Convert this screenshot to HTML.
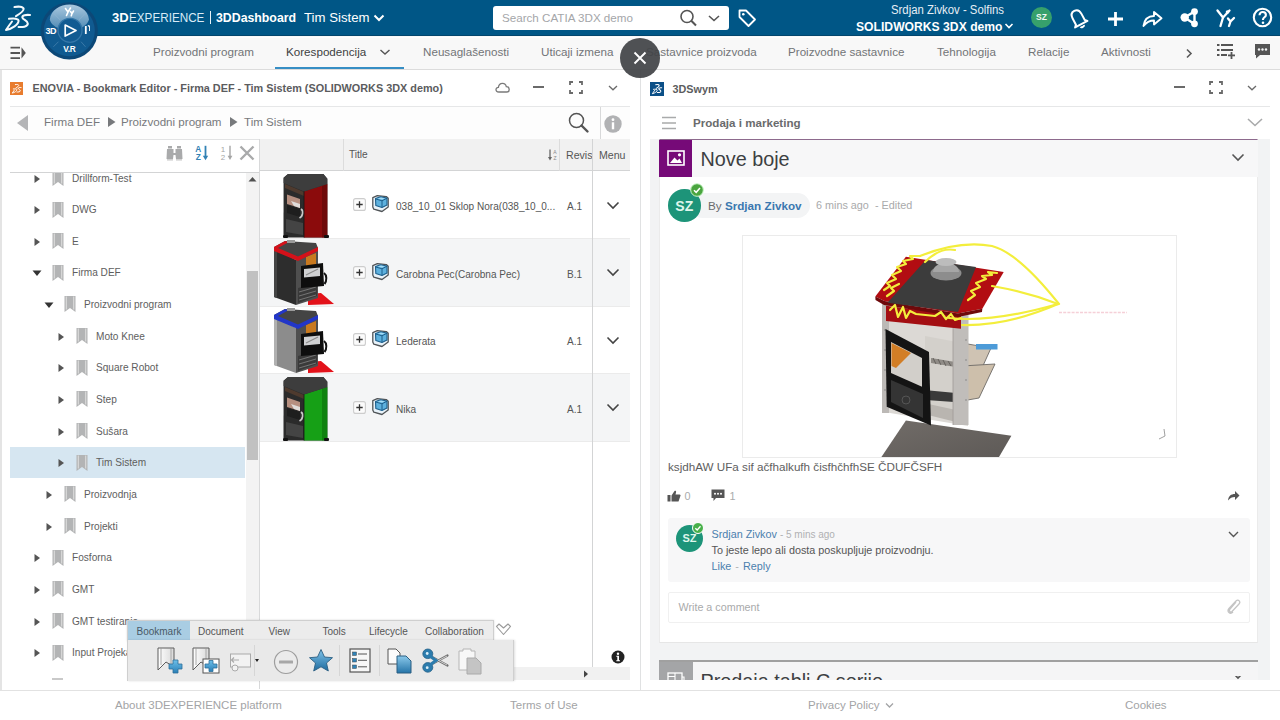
<!DOCTYPE html>
<html><head><meta charset="utf-8">
<style>
*{box-sizing:border-box;margin:0;padding:0}
html,body{width:1280px;height:720px;overflow:hidden;background:#fff;font-family:"Liberation Sans",sans-serif;position:relative}
.a{position:absolute}
.t{position:absolute;white-space:nowrap}
#hdr{left:0;top:0;width:1280px;height:36px;background:#005686}
#nav{left:0;top:36px;width:1280px;height:34px;background:#f8f8f8;border-bottom:1.5px solid #dcdcdc}
.nv{font-size:11.65px;line-height:13.4px;color:#727477;top:44.6px}
#lp{left:2px;top:70px;width:638px;height:618px;background:#fff}
#rp{left:641px;top:70px;width:639px;height:618px;background:#fff}
#ftr{left:0;top:689.5px;width:1280px;height:31px;background:#fff;border-top:1.5px solid #e2e2e2}
.ft{font-size:11.5px;line-height:13px;color:#a3a4a6;top:698.5px}
</style></head><body>
<!-- header -->
<div id="hdr" class="a"></div>
<div id="nav" class="a"></div>
<div class="a" style="left:0;top:35.3px;width:1280px;height:1.2px;background:#03466d"></div><div class="a" style="left:0;top:36.5px;width:1280px;height:1.5px;background:#fdfdfd"></div>

<!-- header content -->
<svg class="a" style="left:0;top:0" width="36" height="36" viewBox="0 0 36 36"><g fill="none" stroke="#f4f9fc" stroke-linecap="round" stroke-linejoin="round">
<path d="M14.5 7 C18 6.3 23 6.4 23.6 8.6 C24.2 11 19.5 14 16 16.2" stroke-width="2.1"/>
<path d="M9 18.8 C13 18.4 18.6 18.2 18.6 20.8 C18.6 24.5 12 28.8 6 30 C8 27 10.5 23.5 12 21.5" stroke-width="2"/>
<path d="M30 15 C26 14.7 22 15 22.4 17.6 C22.8 19.8 27.8 20.5 27.8 23.6 C27.8 27 22 27.2 18.6 27" stroke-width="2.1"/>
</g></svg>
<div class="t" style="left:112px;top:10px;font-size:13px;line-height:15px;color:#fff;font-weight:bold">3D</div>
<div class="t" style="left:128.5px;top:10px;font-size:13px;line-height:15px;color:#d9ebf7;transform:scaleX(0.9);transform-origin:0 0">EXPERIENCE</div>
<div class="a" style="left:210px;top:11px;width:1.3px;height:13px;background:#e8f2f8"></div>
<div class="t" style="left:216px;top:10px;font-size:13px;line-height:15px;color:#fff;font-weight:bold;transform:scaleX(0.947);transform-origin:0 0">3DDashboard</div>
<div class="t" style="left:303.5px;top:10px;font-size:13.4px;line-height:15px;color:#fff;transform:scaleX(0.985);transform-origin:0 0">Tim Sistem</div>
<svg class="a" style="left:373px;top:13px" width="12" height="10" viewBox="0 0 12 10"><path d="M1.5 2.5 L6 7 L10.5 2.5" fill="none" stroke="#fff" stroke-width="2"/></svg>
<div class="a" style="left:493px;top:6px;width:236px;height:24px;background:#fff;border-radius:3px"></div>
<div class="t" style="left:502px;top:10.6px;font-size:11.63px;line-height:13.4px;color:#a4a6a9">Search CATIA 3DX demo</div>
<svg class="a" style="left:679px;top:9px" width="20" height="18" viewBox="0 0 20 18"><circle cx="8" cy="7.5" r="6" fill="none" stroke="#555" stroke-width="1.6"/><path d="M12.3 11.8 L17 16.5" stroke="#555" stroke-width="2"/></svg>
<svg class="a" style="left:707px;top:13px" width="14" height="10" viewBox="0 0 14 10"><path d="M2 3 L7 7.5 L12 3" fill="none" stroke="#555" stroke-width="1.6"/></svg>
<svg class="a" style="left:737px;top:8px" width="20" height="20" viewBox="0 0 20 20"><path d="M2.5 2.5 L9 2.5 L18 11.5 L11.5 18 L2.5 9 Z" fill="none" stroke="#fff" stroke-width="1.8" stroke-linejoin="round"/><circle cx="6.3" cy="6.3" r="1.3" fill="#fff"/></svg>
<div class="t" style="left:891px;top:3px;font-size:12px;line-height:14px;color:#e6eef5;transform:scaleX(0.946);transform-origin:0 0">Srdjan Zivkov - Solfins</div>
<div class="t" style="left:855.5px;top:18.5px;font-size:13px;line-height:15px;color:#fff;font-weight:bold;transform:scaleX(0.935);transform-origin:0 0">SOLIDWORKS 3DX demo</div>
<svg class="a" style="left:1004px;top:22px" width="10" height="8" viewBox="0 0 10 8"><path d="M1.5 2 L5 5.5 L8.5 2" fill="none" stroke="#fff" stroke-width="1.6"/></svg>
<div class="a" style="left:1031px;top:6.8px;width:21px;height:21px;border-radius:50%;background:#36a06c"></div>
<div class="t" style="left:1031px;top:12px;width:21px;text-align:center;font-size:8.5px;line-height:10px;font-weight:bold;color:#f2f8f4">SZ</div>
<svg class="a" style="left:1066px;top:6px" width="24" height="23" viewBox="0 0 24 23"><g transform="rotate(-28 12 12)"><path d="M7 17 L7 10 C7 6 9 4 12 4 C15 4 17 6 17 10 L17 17 L19 19 H5 L7 17 Z" fill="none" stroke="#fff" stroke-width="2" stroke-linejoin="round"/><path d="M10 21 C10.5 22.5 13.5 22.5 14 21" fill="none" stroke="#fff" stroke-width="2"/></g></svg>
<svg class="a" style="left:1107px;top:10.5px" width="17" height="16" viewBox="0 0 17 16"><path d="M8.5 1 V15 M1 8 H16" stroke="#fff" stroke-width="2.8"/></svg>
<svg class="a" style="left:1142px;top:9px" width="21" height="19" viewBox="0 0 21 19"><path d="M1.5 17 C2.5 10 6.5 7 12 7 L12 3 L19.5 9.3 L12 15.5 L12 11.5 C7.5 11.5 4.5 13 1.5 17Z" fill="none" stroke="#fff" stroke-width="1.9" stroke-linejoin="round"/></svg>
<svg class="a" style="left:1179px;top:7px" width="21" height="21" viewBox="0 0 21 21"><path d="M5.5 10.5 L15.5 4.5 L15.5 17 Z" fill="none" stroke="#fff" stroke-width="2.4" stroke-linejoin="round"/><circle cx="5.7" cy="10.5" r="4.2" fill="#fff"/><circle cx="15.5" cy="4.6" r="3.4" fill="#fff"/><circle cx="15.5" cy="16.8" r="3.4" fill="#fff"/></svg>
<svg class="a" style="left:1215px;top:7px" width="21" height="21" viewBox="0 0 21 21"><g fill="none" stroke="#fff" stroke-width="2.3" stroke-linecap="round" stroke-linejoin="round"><path d="M2.5 3.5 L8 10.5 L5.5 19"/><path d="M14.5 3.5 L8 10.5"/><path d="M13 11.5 L15.5 14.5 L14 19 M19 11 L15.5 14.5"/></g><circle cx="12.5" cy="5" r="1.8" fill="#fff"/></svg>
<svg class="a" style="left:1252px;top:7px" width="21" height="21" viewBox="0 0 21 21"><circle cx="10.5" cy="10.5" r="8.7" fill="none" stroke="#fff" stroke-width="2.1"/><path d="M7.5 8.3 C7.5 6 9.2 5 10.7 5 C12.5 5 13.9 6.2 13.9 7.9 C13.9 10.3 11 10.3 11 12.6 L11 13" fill="none" stroke="#fff" stroke-width="2.1"/><circle cx="11" cy="15.8" r="1.3" fill="#fff"/></svg>
<!-- nav content -->
<svg class="a" style="left:9px;top:45px" width="18" height="16" viewBox="0 0 18 16"><path d="M1.5 2.6 H11 M1.5 8 H11 M1.5 13.2 H11" stroke="#555" stroke-width="1.8"/><path d="M12.5 2.3 L16.8 8 L12.5 13.6 Z" fill="#555"/></svg>
<div class="t nv" style="left:153px">Proizvodni program</div>
<div class="t nv" style="left:286px;color:#3d3f42">Korespodencija</div>
<svg class="a" style="left:379px;top:48px" width="12" height="8" viewBox="0 0 12 8"><path d="M1.5 2 L6 6 L10.5 2" fill="none" stroke="#555" stroke-width="1.4"/></svg>
<div class="a" style="left:275px;top:67px;width:129px;height:2px;background:#368ec4"></div>
<div class="t nv" style="left:423px">Neusaglašenosti</div>
<div class="t nv" style="left:541px">Uticaji izmena</div>
<div class="t nv" style="left:646px">Sastavnice proizvoda</div>
<div class="t nv" style="left:788px">Proizvodne sastavnice</div>
<div class="t nv" style="left:937px">Tehnologija</div>
<div class="t nv" style="left:1028px">Relacije</div>
<div class="t nv" style="left:1101px">Aktivnosti</div>
<svg class="a" style="left:1185px;top:48px" width="9" height="11" viewBox="0 0 9 11"><path d="M2 1.5 L6 5.5 L2 9.5" fill="none" stroke="#5a5a5a" stroke-width="1.6"/></svg>
<svg class="a" style="left:1216px;top:43px" width="20" height="18" viewBox="0 0 20 18"><g fill="#555"><rect x="1" y="1" width="2.5" height="2"/><rect x="5" y="1" width="12" height="2"/><rect x="1" y="6" width="2.5" height="2"/><rect x="5" y="6" width="12" height="2"/><rect x="1" y="11" width="2.5" height="2"/><rect x="5" y="11" width="6" height="2"/><rect x="12" y="11.5" width="7" height="1.8"/><rect x="14.6" y="9" width="1.8" height="7"/></g></svg>
<svg class="a" style="left:1254px;top:43px" width="17" height="17" viewBox="0 0 17 17"><path d="M1 1 H16 V12 H6 L2 15.5 V12 H1 Z" fill="#555"/><circle cx="5" cy="6.5" r="1.2" fill="#f4f5f6"/><circle cx="8.5" cy="6.5" r="1.2" fill="#f4f5f6"/><circle cx="12" cy="6.5" r="1.2" fill="#f4f5f6"/></svg>


<div id="lp" class="a"></div>
<div id="rp" class="a"></div>

<!-- left panel content -->
<div class="a" style="left:0;top:70px;width:1.5px;height:620px;background:#e4e4e4"></div>
<div class="a" style="left:10px;top:82px;width:13px;height:13px;background:#e87c2e"></div>
<svg class="a" style="left:10px;top:82px" width="13" height="13" viewBox="0 0 13 13"><g fill="none" stroke="#fff" stroke-linecap="round" stroke-linejoin="round" transform="scale(0.37)"><path d="M14.5 7 C18 6.3 23 6.4 23.6 8.6 C24.2 11 19.5 14 16 16.2" stroke-width="2.6"/><path d="M9 18.8 C13 18.4 18.6 18.2 18.6 20.8 C18.6 24.5 12 28.8 6 30 C8 27 10.5 23.5 12 21.5" stroke-width="2.5"/><path d="M30 15 C26 14.7 22 15 22.4 17.6 C22.8 19.8 27.8 20.5 27.8 23.6 C27.8 27 22 27.2 18.6 27" stroke-width="2.6"/></g></svg>
<div class="t" style="left:32.5px;top:82px;font-size:10.85px;font-weight:bold;color:#5b5c5e">ENOVIA - Bookmark Editor - Firma DEF - Tim Sistem (SOLIDWORKS 3DX demo)</div>
<svg class="a" style="left:494.5px;top:82px" width="15" height="11" viewBox="0 0 15 11"><path d="M3.8 10 C1.8 10 1 8.8 1 7.6 C1 6.2 2.1 5.3 3.4 5.4 C3.6 3 5.3 1.3 7.5 1.3 C9.6 1.3 11 2.8 11.3 4.6 C13 4.6 14.2 5.8 14.2 7.4 C14.2 8.9 13.1 10 11.7 10 Z" fill="none" stroke="#7a7a7a" stroke-width="1.3"/></svg>
<div class="a" style="left:533px;top:86.3px;width:11px;height:1.8px;background:#6a6a6a"></div>
<svg class="a" style="left:568.5px;top:81px" width="14" height="13" viewBox="0 0 14 13"><path d="M1 4 V1 H4 M10 1 H13 V4 M13 9 V12 H10 M4 12 H1 V9" fill="none" stroke="#6a6a6a" stroke-width="1.8"/></svg>
<svg class="a" style="left:607.5px;top:84.5px" width="10" height="6" viewBox="0 0 10 6"><path d="M1 1 L5 4.8 L9 1" fill="none" stroke="#6a6a6a" stroke-width="1.3"/></svg>
<div class="a" style="left:10px;top:106px;width:620px;height:1px;background:#e6e7e8"></div>
<!-- breadcrumb -->
<div class="a" style="left:10px;top:107px;width:620px;height:32px;background:#fdfdfd"></div>
<svg class="a" style="left:16px;top:114px" width="13" height="18" viewBox="0 0 13 18"><path d="M12 1 L1 9 L12 17 Z" fill="#b4b5b7"/></svg>
<div class="t" style="left:44px;top:115px;font-size:11.6px;color:#77797c">Firma DEF</div>
<svg class="a" style="left:107px;top:116px" width="9" height="12" viewBox="0 0 9 12"><path d="M1 1 L8.5 6 L1 11 Z" fill="#77797c"/></svg>
<div class="t" style="left:121px;top:115px;font-size:11.6px;color:#77797c">Proizvodni program</div>
<svg class="a" style="left:229px;top:116px" width="9" height="12" viewBox="0 0 9 12"><path d="M1 1 L8.5 6 L1 11 Z" fill="#77797c"/></svg>
<div class="t" style="left:244px;top:115px;font-size:11.6px;color:#77797c">Tim Sistem</div>
<svg class="a" style="left:568px;top:112px" width="22" height="22" viewBox="0 0 22 22"><circle cx="8.5" cy="8.5" r="7" fill="none" stroke="#555" stroke-width="1.5"/><path d="M13.5 13.5 L19.5 19.5" stroke="#555" stroke-width="2.4" stroke-linecap="round"/></svg>
<div class="a" style="left:600px;top:107px;width:1px;height:32px;background:#d8d9da"></div>
<svg class="a" style="left:604px;top:115px" width="18" height="18" viewBox="0 0 18 18"><circle cx="9" cy="9" r="8.7" fill="#b1b2b4"/><circle cx="9" cy="4.7" r="1.4" fill="#fff"/><rect x="7.8" y="7.3" width="2.4" height="7" fill="#fff"/></svg>
<div class="a" style="left:10px;top:139px;width:620px;height:1px;background:#e2e3e4"></div>
<!-- tree toolbar -->
<svg class="a" style="left:166px;top:145px" width="17" height="16" viewBox="0 0 17 16"><g fill="#a9aaab"><rect x="2" y="1" width="4" height="2.5"/><rect x="11" y="1" width="4" height="2.5"/><path d="M1 4 H7.5 V8 H9.5 V4 H16 L16.5 14 H10 L9.5 10 H7.5 L7 14 H0.5 Z"/></g><rect x="1" y="14.2" width="6" height="1.3" fill="#c7c7c7"/><rect x="10" y="14.2" width="6" height="1.3" fill="#c7c7c7"/></svg>
<svg class="a" style="left:195px;top:145px" width="14" height="16" viewBox="0 0 14 16"><text x="3.3" y="7.3" font-family="Liberation Sans" font-weight="bold" font-size="8.3" fill="#3282b4" text-anchor="middle">A</text><text x="3.3" y="15" font-family="Liberation Sans" font-weight="bold" font-size="8.3" fill="#3282b4" text-anchor="middle">Z</text><path d="M10.5 0.8 V12.5" stroke="#3282b4" stroke-width="1.8"/><path d="M7.8 10.8 L10.5 15.3 L13.2 10.8 Z" fill="#3282b4"/></svg>
<svg class="a" style="left:220px;top:145px" width="14" height="16" viewBox="0 0 14 16"><text x="3" y="7" font-family="Liberation Sans" font-size="8" fill="#a5a5a5" text-anchor="middle">1</text><text x="3" y="15" font-family="Liberation Sans" font-size="8" fill="#a5a5a5" text-anchor="middle">2</text><path d="M10 0.8 V12.5" stroke="#a5a5a5" stroke-width="1.4"/><path d="M7.6 10.8 L10 15 L12.4 10.8 Z" fill="#a5a5a5"/></svg>
<svg class="a" style="left:239px;top:145px" width="16" height="16" viewBox="0 0 16 16"><path d="M1.5 1.5 L14.5 14.5 M14.5 1.5 L1.5 14.5" stroke="#a9aaab" stroke-width="2.4"/></svg>
<div class="a" style="left:10px;top:172px;width:250px;height:1px;background:#d3d4d5"></div>
<!-- tree -->
<div class="a" style="left:0;top:173px;width:246px;height:507px;overflow:hidden"><div class="a" style="left:0;top:-173px;width:246px;height:720px">
<div class="a" style="left:10px;top:447px;width:235px;height:31px;background:#d6e6f1"></div>
<svg class="a" style="left:33px;top:173.5px" width="8" height="10" viewBox="0 0 8 10"><path d="M1.5 1 L7 5 L1.5 9 Z" fill="#555"/></svg>
<svg class="a" style="left:52px;top:169.8px" width="12" height="16" viewBox="0 0 12 16"><path d="M0.5 0 H11.5 V16 L6 12 L0.5 16 Z" fill="#b3b4b5"/><path d="M2.3 0.5 V13.5 M9.7 0.5 V13.5" stroke="#dcdcdc" stroke-width="1.1"/></svg>
<div class="t" style="left:72px;top:172.5px;font-size:10.1px;color:#5e5e5e">Drillform-Test</div>
<svg class="a" style="left:33px;top:205.2px" width="8" height="10" viewBox="0 0 8 10"><path d="M1.5 1 L7 5 L1.5 9 Z" fill="#555"/></svg>
<svg class="a" style="left:52px;top:201.5px" width="12" height="16" viewBox="0 0 12 16"><path d="M0.5 0 H11.5 V16 L6 12 L0.5 16 Z" fill="#b3b4b5"/><path d="M2.3 0.5 V13.5 M9.7 0.5 V13.5" stroke="#dcdcdc" stroke-width="1.1"/></svg>
<div class="t" style="left:72px;top:204.2px;font-size:10.1px;color:#5e5e5e">DWG</div>
<svg class="a" style="left:33px;top:236.8px" width="8" height="10" viewBox="0 0 8 10"><path d="M1.5 1 L7 5 L1.5 9 Z" fill="#555"/></svg>
<svg class="a" style="left:52px;top:233.1px" width="12" height="16" viewBox="0 0 12 16"><path d="M0.5 0 H11.5 V16 L6 12 L0.5 16 Z" fill="#b3b4b5"/><path d="M2.3 0.5 V13.5 M9.7 0.5 V13.5" stroke="#dcdcdc" stroke-width="1.1"/></svg>
<div class="t" style="left:72px;top:235.8px;font-size:10.1px;color:#5e5e5e">E</div>
<svg class="a" style="left:32px;top:269.4px" width="10" height="8" viewBox="0 0 10 8"><path d="M0.5 1.5 L9.5 1.5 L5 7 Z" fill="#333"/></svg>
<svg class="a" style="left:52px;top:264.7px" width="12" height="16" viewBox="0 0 12 16"><path d="M0.5 0 H11.5 V16 L6 12 L0.5 16 Z" fill="#b3b4b5"/><path d="M2.3 0.5 V13.5 M9.7 0.5 V13.5" stroke="#dcdcdc" stroke-width="1.1"/></svg>
<div class="t" style="left:72px;top:267.4px;font-size:10.1px;color:#5e5e5e">Firma DEF</div>
<svg class="a" style="left:44px;top:301.1px" width="10" height="8" viewBox="0 0 10 8"><path d="M0.5 1.5 L9.5 1.5 L5 7 Z" fill="#333"/></svg>
<svg class="a" style="left:64px;top:296.4px" width="12" height="16" viewBox="0 0 12 16"><path d="M0.5 0 H11.5 V16 L6 12 L0.5 16 Z" fill="#b3b4b5"/><path d="M2.3 0.5 V13.5 M9.7 0.5 V13.5" stroke="#dcdcdc" stroke-width="1.1"/></svg>
<div class="t" style="left:84px;top:299.1px;font-size:10.1px;color:#5e5e5e">Proizvodni program</div>
<svg class="a" style="left:57px;top:331.8px" width="8" height="10" viewBox="0 0 8 10"><path d="M1.5 1 L7 5 L1.5 9 Z" fill="#555"/></svg>
<svg class="a" style="left:76px;top:328.1px" width="12" height="16" viewBox="0 0 12 16"><path d="M0.5 0 H11.5 V16 L6 12 L0.5 16 Z" fill="#b3b4b5"/><path d="M2.3 0.5 V13.5 M9.7 0.5 V13.5" stroke="#dcdcdc" stroke-width="1.1"/></svg>
<div class="t" style="left:96px;top:330.8px;font-size:10.1px;color:#5e5e5e">Moto Knee</div>
<svg class="a" style="left:57px;top:363.4px" width="8" height="10" viewBox="0 0 8 10"><path d="M1.5 1 L7 5 L1.5 9 Z" fill="#555"/></svg>
<svg class="a" style="left:76px;top:359.7px" width="12" height="16" viewBox="0 0 12 16"><path d="M0.5 0 H11.5 V16 L6 12 L0.5 16 Z" fill="#b3b4b5"/><path d="M2.3 0.5 V13.5 M9.7 0.5 V13.5" stroke="#dcdcdc" stroke-width="1.1"/></svg>
<div class="t" style="left:96px;top:362.4px;font-size:10.1px;color:#5e5e5e">Square Robot</div>
<svg class="a" style="left:57px;top:395.0px" width="8" height="10" viewBox="0 0 8 10"><path d="M1.5 1 L7 5 L1.5 9 Z" fill="#555"/></svg>
<svg class="a" style="left:76px;top:391.3px" width="12" height="16" viewBox="0 0 12 16"><path d="M0.5 0 H11.5 V16 L6 12 L0.5 16 Z" fill="#b3b4b5"/><path d="M2.3 0.5 V13.5 M9.7 0.5 V13.5" stroke="#dcdcdc" stroke-width="1.1"/></svg>
<div class="t" style="left:96px;top:394.0px;font-size:10.1px;color:#5e5e5e">Step</div>
<svg class="a" style="left:57px;top:426.7px" width="8" height="10" viewBox="0 0 8 10"><path d="M1.5 1 L7 5 L1.5 9 Z" fill="#555"/></svg>
<svg class="a" style="left:76px;top:423.0px" width="12" height="16" viewBox="0 0 12 16"><path d="M0.5 0 H11.5 V16 L6 12 L0.5 16 Z" fill="#b3b4b5"/><path d="M2.3 0.5 V13.5 M9.7 0.5 V13.5" stroke="#dcdcdc" stroke-width="1.1"/></svg>
<div class="t" style="left:96px;top:425.7px;font-size:10.1px;color:#5e5e5e">Sušara</div>
<svg class="a" style="left:57px;top:458.3px" width="8" height="10" viewBox="0 0 8 10"><path d="M1.5 1 L7 5 L1.5 9 Z" fill="#555"/></svg>
<svg class="a" style="left:76px;top:454.6px" width="12" height="16" viewBox="0 0 12 16"><path d="M0.5 0 H11.5 V16 L6 12 L0.5 16 Z" fill="#b3b4b5"/><path d="M2.3 0.5 V13.5 M9.7 0.5 V13.5" stroke="#dcdcdc" stroke-width="1.1"/></svg>
<div class="t" style="left:96px;top:457.3px;font-size:10.1px;color:#5e5e5e">Tim Sistem</div>
<svg class="a" style="left:45px;top:490.0px" width="8" height="10" viewBox="0 0 8 10"><path d="M1.5 1 L7 5 L1.5 9 Z" fill="#555"/></svg>
<svg class="a" style="left:64px;top:486.3px" width="12" height="16" viewBox="0 0 12 16"><path d="M0.5 0 H11.5 V16 L6 12 L0.5 16 Z" fill="#b3b4b5"/><path d="M2.3 0.5 V13.5 M9.7 0.5 V13.5" stroke="#dcdcdc" stroke-width="1.1"/></svg>
<div class="t" style="left:84px;top:489.0px;font-size:10.1px;color:#5e5e5e">Proizvodnja</div>
<svg class="a" style="left:45px;top:521.6px" width="8" height="10" viewBox="0 0 8 10"><path d="M1.5 1 L7 5 L1.5 9 Z" fill="#555"/></svg>
<svg class="a" style="left:64px;top:517.9px" width="12" height="16" viewBox="0 0 12 16"><path d="M0.5 0 H11.5 V16 L6 12 L0.5 16 Z" fill="#b3b4b5"/><path d="M2.3 0.5 V13.5 M9.7 0.5 V13.5" stroke="#dcdcdc" stroke-width="1.1"/></svg>
<div class="t" style="left:84px;top:520.6px;font-size:10.1px;color:#5e5e5e">Projekti</div>
<svg class="a" style="left:33px;top:553.3px" width="8" height="10" viewBox="0 0 8 10"><path d="M1.5 1 L7 5 L1.5 9 Z" fill="#555"/></svg>
<svg class="a" style="left:52px;top:549.6px" width="12" height="16" viewBox="0 0 12 16"><path d="M0.5 0 H11.5 V16 L6 12 L0.5 16 Z" fill="#b3b4b5"/><path d="M2.3 0.5 V13.5 M9.7 0.5 V13.5" stroke="#dcdcdc" stroke-width="1.1"/></svg>
<div class="t" style="left:72px;top:552.3px;font-size:10.1px;color:#5e5e5e">Fosforna</div>
<svg class="a" style="left:33px;top:585.0px" width="8" height="10" viewBox="0 0 8 10"><path d="M1.5 1 L7 5 L1.5 9 Z" fill="#555"/></svg>
<svg class="a" style="left:52px;top:581.3px" width="12" height="16" viewBox="0 0 12 16"><path d="M0.5 0 H11.5 V16 L6 12 L0.5 16 Z" fill="#b3b4b5"/><path d="M2.3 0.5 V13.5 M9.7 0.5 V13.5" stroke="#dcdcdc" stroke-width="1.1"/></svg>
<div class="t" style="left:72px;top:584.0px;font-size:10.1px;color:#5e5e5e">GMT</div>
<svg class="a" style="left:33px;top:616.6px" width="8" height="10" viewBox="0 0 8 10"><path d="M1.5 1 L7 5 L1.5 9 Z" fill="#555"/></svg>
<svg class="a" style="left:52px;top:612.9px" width="12" height="16" viewBox="0 0 12 16"><path d="M0.5 0 H11.5 V16 L6 12 L0.5 16 Z" fill="#b3b4b5"/><path d="M2.3 0.5 V13.5 M9.7 0.5 V13.5" stroke="#dcdcdc" stroke-width="1.1"/></svg>
<div class="t" style="left:72px;top:615.6px;font-size:10.1px;color:#5e5e5e">GMT testiranje</div>
<svg class="a" style="left:33px;top:648.2px" width="8" height="10" viewBox="0 0 8 10"><path d="M1.5 1 L7 5 L1.5 9 Z" fill="#555"/></svg>
<svg class="a" style="left:52px;top:644.5px" width="12" height="16" viewBox="0 0 12 16"><path d="M0.5 0 H11.5 V16 L6 12 L0.5 16 Z" fill="#b3b4b5"/><path d="M2.3 0.5 V13.5 M9.7 0.5 V13.5" stroke="#dcdcdc" stroke-width="1.1"/></svg>
<div class="t" style="left:72px;top:647.2px;font-size:10.1px;color:#5e5e5e">Input Projekat</div>
<div class="a" style="left:52px;top:677.5px;width:11px;height:2.5px;background:#c9c9c9"></div>
</div></div>
<div class="a" style="left:246px;top:173px;width:13px;height:507px;background:#f3f3f3"></div>
<div class="a" style="left:247px;top:271px;width:11px;height:189px;background:#c1c1c1"></div>
<svg class="a" style="left:248px;top:176px" width="9" height="6" viewBox="0 0 9 6"><path d="M0.5 5.5 L4.5 1 L8.5 5.5 Z" fill="#505050"/></svg>
<div class="a" style="left:259px;top:139px;width:1px;height:550px;background:#d8d9da"></div>
<div class="a" style="left:260px;top:139px;width:370px;height:32px;background:#f1f1f1;border-bottom:1px solid #d3d4d5"></div>
<div class="a" style="left:343px;top:139px;width:1px;height:32px;background:#dcdcdc"></div>
<div class="a" style="left:559px;top:139px;width:1px;height:32px;background:#dcdcdc"></div>
<div class="t" style="left:349px;top:149px;font-size:10.1px;color:#555">Title</div>
<svg class="a" style="left:547px;top:149px" width="11" height="12" viewBox="0 0 11 12"><path d="M3 0.5 V10" stroke="#666" stroke-width="1.3"/><path d="M1 8 L3 11.5 L5 8Z" fill="#666"/><text x="8" y="5" font-family="Liberation Sans" font-size="5" fill="#888" text-anchor="middle">A</text><text x="8" y="11" font-family="Liberation Sans" font-size="5" fill="#888" text-anchor="middle">Z</text></svg>
<div class="a" style="left:566px;top:148px;width:26px;height:14px;overflow:hidden"><div class="t" style="left:0;top:1px;font-size:10.6px;color:#555">Revision</div></div>
<div class="t" style="left:599px;top:149px;font-size:10.6px;color:#555">Menu</div>
<div class="a" style="left:260px;top:238.5px;width:370px;height:67.5px;background:#f4f5f6"></div>
<div class="a" style="left:260px;top:373.5px;width:370px;height:67.5px;background:#f4f5f6"></div>
<div class="a" style="left:260px;top:238px;width:370px;height:1px;background:#ebebeb"></div><div class="a" style="left:260px;top:305.5px;width:370px;height:1px;background:#ebebeb"></div><div class="a" style="left:260px;top:373px;width:370px;height:1px;background:#ebebeb"></div><div class="a" style="left:260px;top:440.5px;width:370px;height:1px;background:#ebebeb"></div>
<div class="a" style="left:592px;top:139px;width:1px;height:528px;background:#d3d4d5"></div>
<svg class="a" style="left:353px;top:198.2px" width="13" height="13" viewBox="0 0 13 13"><rect x="0.6" y="0.6" width="11.8" height="11.8" rx="2" fill="#fbfbfb" stroke="#cdcdcd" stroke-width="1.1"/><path d="M6.5 3.3 V9.7 M3.3 6.5 H9.7" stroke="#333" stroke-width="1.3"/></svg>
<svg class="a" style="left:371.5px;top:195.2px" width="17" height="18" viewBox="0 0 17 18"><path d="M0.8 2.6 L5.3 0.7 L14.3 1.6 L16.2 3.3 V12 L10 16.5 L1.8 14.2 L0.8 12 Z" fill="#e8f2f9" stroke="#505457" stroke-width="1.3" stroke-linejoin="round"/><path d="M3.5 3.5 L8.5 1.8 L15 3 V10 L10 12.5 L3.8 10.5 Z" fill="#5db1de" stroke="#1d5f8c" stroke-width="1.1" stroke-linejoin="round"/><path d="M3.8 4 L10 5.8 L15 3.2 M10 5.8 V12" stroke="#1d5f8c" stroke-width="1" fill="none"/><path d="M5.5 3.5 L9 2.5 L13 3.4 L10 4.6Z" fill="#a6dcf5"/></svg>
<div class="t" style="left:396px;top:201.2px;font-size:10.05px;color:#555">038_10_01 Sklop Nora(038_10_0...</div>
<div class="t" style="left:567px;top:201.2px;font-size:10.05px;color:#555">A.1</div>
<svg class="a" style="left:606px;top:200.8px" width="14" height="9" viewBox="0 0 14 9"><path d="M1.5 1.5 L7 7 L12.5 1.5" fill="none" stroke="#444" stroke-width="1.6"/></svg>
<svg class="a" style="left:353px;top:265.8px" width="13" height="13" viewBox="0 0 13 13"><rect x="0.6" y="0.6" width="11.8" height="11.8" rx="2" fill="#fbfbfb" stroke="#cdcdcd" stroke-width="1.1"/><path d="M6.5 3.3 V9.7 M3.3 6.5 H9.7" stroke="#333" stroke-width="1.3"/></svg>
<svg class="a" style="left:371.5px;top:262.8px" width="17" height="18" viewBox="0 0 17 18"><path d="M0.8 2.6 L5.3 0.7 L14.3 1.6 L16.2 3.3 V12 L10 16.5 L1.8 14.2 L0.8 12 Z" fill="#e8f2f9" stroke="#505457" stroke-width="1.3" stroke-linejoin="round"/><path d="M3.5 3.5 L8.5 1.8 L15 3 V10 L10 12.5 L3.8 10.5 Z" fill="#5db1de" stroke="#1d5f8c" stroke-width="1.1" stroke-linejoin="round"/><path d="M3.8 4 L10 5.8 L15 3.2 M10 5.8 V12" stroke="#1d5f8c" stroke-width="1" fill="none"/><path d="M5.5 3.5 L9 2.5 L13 3.4 L10 4.6Z" fill="#a6dcf5"/></svg>
<div class="t" style="left:396px;top:268.8px;font-size:10.05px;color:#555">Carobna Pec(Carobna Pec)</div>
<div class="t" style="left:567px;top:268.8px;font-size:10.05px;color:#555">B.1</div>
<svg class="a" style="left:606px;top:268.2px" width="14" height="9" viewBox="0 0 14 9"><path d="M1.5 1.5 L7 7 L12.5 1.5" fill="none" stroke="#444" stroke-width="1.6"/></svg>
<svg class="a" style="left:353px;top:333.2px" width="13" height="13" viewBox="0 0 13 13"><rect x="0.6" y="0.6" width="11.8" height="11.8" rx="2" fill="#fbfbfb" stroke="#cdcdcd" stroke-width="1.1"/><path d="M6.5 3.3 V9.7 M3.3 6.5 H9.7" stroke="#333" stroke-width="1.3"/></svg>
<svg class="a" style="left:371.5px;top:330.2px" width="17" height="18" viewBox="0 0 17 18"><path d="M0.8 2.6 L5.3 0.7 L14.3 1.6 L16.2 3.3 V12 L10 16.5 L1.8 14.2 L0.8 12 Z" fill="#e8f2f9" stroke="#505457" stroke-width="1.3" stroke-linejoin="round"/><path d="M3.5 3.5 L8.5 1.8 L15 3 V10 L10 12.5 L3.8 10.5 Z" fill="#5db1de" stroke="#1d5f8c" stroke-width="1.1" stroke-linejoin="round"/><path d="M3.8 4 L10 5.8 L15 3.2 M10 5.8 V12" stroke="#1d5f8c" stroke-width="1" fill="none"/><path d="M5.5 3.5 L9 2.5 L13 3.4 L10 4.6Z" fill="#a6dcf5"/></svg>
<div class="t" style="left:396px;top:336.2px;font-size:10.05px;color:#555">Lederata</div>
<div class="t" style="left:567px;top:336.2px;font-size:10.05px;color:#555">A.1</div>
<svg class="a" style="left:606px;top:335.8px" width="14" height="9" viewBox="0 0 14 9"><path d="M1.5 1.5 L7 7 L12.5 1.5" fill="none" stroke="#444" stroke-width="1.6"/></svg>
<svg class="a" style="left:353px;top:400.8px" width="13" height="13" viewBox="0 0 13 13"><rect x="0.6" y="0.6" width="11.8" height="11.8" rx="2" fill="#fbfbfb" stroke="#cdcdcd" stroke-width="1.1"/><path d="M6.5 3.3 V9.7 M3.3 6.5 H9.7" stroke="#333" stroke-width="1.3"/></svg>
<svg class="a" style="left:371.5px;top:397.8px" width="17" height="18" viewBox="0 0 17 18"><path d="M0.8 2.6 L5.3 0.7 L14.3 1.6 L16.2 3.3 V12 L10 16.5 L1.8 14.2 L0.8 12 Z" fill="#e8f2f9" stroke="#505457" stroke-width="1.3" stroke-linejoin="round"/><path d="M3.5 3.5 L8.5 1.8 L15 3 V10 L10 12.5 L3.8 10.5 Z" fill="#5db1de" stroke="#1d5f8c" stroke-width="1.1" stroke-linejoin="round"/><path d="M3.8 4 L10 5.8 L15 3.2 M10 5.8 V12" stroke="#1d5f8c" stroke-width="1" fill="none"/><path d="M5.5 3.5 L9 2.5 L13 3.4 L10 4.6Z" fill="#a6dcf5"/></svg>
<div class="t" style="left:396px;top:403.8px;font-size:10.05px;color:#555">Nika</div>
<div class="t" style="left:567px;top:403.8px;font-size:10.05px;color:#555">A.1</div>
<svg class="a" style="left:606px;top:403.2px" width="14" height="9" viewBox="0 0 14 9"><path d="M1.5 1.5 L7 7 L12.5 1.5" fill="none" stroke="#444" stroke-width="1.6"/></svg>



<svg class="a" style="left:282px;top:173px" width="48" height="66" viewBox="0 0 48 66">
<path d="M1.6 4.8 L6 0.9 H41.4 L45.3 5.7 V62 L43 64.5 H4 L1.5 62 Z" fill="#2b2b2b"/>
<path d="M22 18.4 L45.3 11 V62 L43 64.5 H22 Z" fill="#8b0b0c"/>
<path d="M40 13 L45.3 11 V62 L43 64.5 H40 Z" fill="#5c0808" opacity="0.6"/>
<path d="M1.6 4.8 L6 0.9 H41.4 L45.3 5.7 L45.3 11 L22 18.4 L1.6 10 Z" fill="#3d3d3d"/>
<path d="M3 11 L22 19 V23 L3 15 Z" fill="#4e3a2e"/>
<path d="M5 21.5 L18 26 V35 L5 31 Z" fill="#b68f80"/>
<path d="M9 28 L18 31 V35 L12 33 Z" fill="#e0dcda"/>
<path d="M5 32 L18 36 V44 L5 40 Z" fill="#1e1e1e"/>
<path d="M19 36 C22 38 21 43 17.5 45" stroke="#c9c9c9" stroke-width="1.8" fill="none"/>
<path d="M4 46 L21 50 V62 L4 59 Z" fill="#444"/>
<path d="M22 18.4 V64.5" stroke="#151515" stroke-width="0.8"/>
<rect x="1" y="62" width="5" height="3" rx="1" fill="#111"/><rect x="42" y="62" width="5" height="3" rx="1" fill="#111"/>
</svg>
<svg class="a" style="left:268px;top:238px" width="68" height="68" viewBox="0 0 68 68">
<path d="M40 56 L53 55 L66 66 L40 67 Z" fill="#e3121a"/>
<path d="M6 10 L28 22 V67 L6 59 Z" fill="#2d2d2d"/>
<path d="M6 10 L9 10 V60 L6 59Z" fill="#444"/>
<path d="M28 22 L50 12 V60 L28 67 Z" fill="#4f4f4f"/>
<path d="M38 19 L48 15 V30 L38 34 Z" fill="#c8791f"/>
<path d="M30 50 L49 45 V58 L30 65Z" fill="#3a3a3a"/>
<path d="M31 54 L48 49 M31 58 L48 53 M31 62 L48 57" stroke="#7a7a7a" stroke-width="0.9"/>
<path d="M6 9 L17 3 L48 5 L50 10 L30 22 L6 12 Z" fill="#444"/>
<path d="M6 9 L17 3 L21 4 L10 10 L30 18.5 L50 9 V13 L30 23 L6 13 Z" fill="#d4111a"/>
<path d="M19 2 H27 V5 H19Z" fill="#9a9a9a"/>
<path d="M33 28 L55 25 L56 48 L33 50 Z" fill="#0e0e0e"/>
<path d="M36 31 L52 29.5 V38 L36 39.5 Z" fill="#cfd0d2"/>
<path d="M38 37 L50 31" stroke="#8c8c8c" stroke-width="1.2"/>
<path d="M56 35 C59 37 59 43 56.5 46" stroke="#111" stroke-width="2" fill="none"/>
</svg>
<svg class="a" style="left:268px;top:306px" width="68" height="68" viewBox="0 0 68 68">
<path d="M40 56 L53 55 L66 66 L40 67 Z" fill="#e3121a"/>
<path d="M6 10 L28 22 V67 L6 59 Z" fill="#8c8c8c"/>
<path d="M6 10 L9 10 V60 L6 59Z" fill="#b0b0b0"/>
<path d="M28 22 L50 12 V60 L28 67 Z" fill="#4f4f4f"/>
<path d="M38 19 L48 15 V30 L38 34 Z" fill="#c8791f"/>
<path d="M30 50 L49 45 V58 L30 65Z" fill="#3a3a3a"/>
<path d="M31 54 L48 49 M31 58 L48 53 M31 62 L48 57" stroke="#7a7a7a" stroke-width="0.9"/>
<path d="M6 9 L17 3 L48 5 L50 10 L30 22 L6 12 Z" fill="#444"/>
<path d="M6 9 L17 3 L21 4 L10 10 L30 18.5 L50 9 V13 L30 23 L6 13 Z" fill="#2236c8"/>
<path d="M19 2 H27 V5 H19Z" fill="#9a9a9a"/>
<path d="M33 28 L55 25 L56 48 L33 50 Z" fill="#0e0e0e"/>
<path d="M36 31 L52 29.5 V38 L36 39.5 Z" fill="#cfd0d2"/>
<path d="M38 37 L50 31" stroke="#8c8c8c" stroke-width="1.2"/>
<path d="M56 35 C59 37 59 43 56.5 46" stroke="#111" stroke-width="2" fill="none"/>
</svg>
<svg class="a" style="left:282px;top:376px" width="48" height="66" viewBox="0 0 48 66">
<path d="M1.6 4.8 L6 0.9 H41.4 L45.3 5.7 V62 L43 64.5 H4 L1.5 62 Z" fill="#2b2b2b"/>
<path d="M22 18.4 L45.3 11 V62 L43 64.5 H22 Z" fill="#16a016"/>
<path d="M40 13 L45.3 11 V62 L43 64.5 H40 Z" fill="#0b6e0b" opacity="0.6"/>
<path d="M1.6 4.8 L6 0.9 H41.4 L45.3 5.7 L45.3 11 L22 18.4 L1.6 10 Z" fill="#3d3d3d"/>
<path d="M3 11 L22 19 V23 L3 15 Z" fill="#4e3a2e"/>
<path d="M5 21.5 L18 26 V35 L5 31 Z" fill="#b68f80"/>
<path d="M9 28 L18 31 V35 L12 33 Z" fill="#e0dcda"/>
<path d="M5 32 L18 36 V44 L5 40 Z" fill="#1e1e1e"/>
<path d="M19 36 C22 38 21 43 17.5 45" stroke="#c9c9c9" stroke-width="1.8" fill="none"/>
<path d="M4 46 L21 50 V62 L4 59 Z" fill="#444"/>
<path d="M22 18.4 V64.5" stroke="#151515" stroke-width="0.8"/>
<rect x="1" y="62" width="5" height="3" rx="1" fill="#111"/><rect x="42" y="62" width="5" height="3" rx="1" fill="#111"/>
</svg>
<div class="a" style="left:260px;top:667px;width:370px;height:13px;background:#f1f1f1"></div>
<svg class="a" style="left:582.5px;top:670px" width="6" height="8" viewBox="0 0 6 8"><path d="M1 0.5 L5 4 L1 7.5Z" fill="#444"/></svg>
<svg class="a" style="left:611px;top:650px" width="14" height="14" viewBox="0 0 14 14"><circle cx="7" cy="7" r="6.5" fill="#222"/><circle cx="7" cy="3.7" r="1.2" fill="#fff"/><path d="M5.3 5.8 H8 V10.3 H9 V11.3 H5.3 V10.3 H6.3 V6.8 H5.3Z" fill="#fff"/></svg>
<div class="a" style="left:630px;top:70px;width:10px;height:620px;background:#fff"></div>
<div class="a" style="left:640px;top:70px;width:1px;height:620px;background:#e0e1e2"></div>

<div id="ftr" class="a"></div>
<div class="t ft" style="left:115px">About 3DEXPERIENCE platform</div>
<div class="t ft" style="left:510px">Terms of Use</div>
<div class="t ft" style="left:808px">Privacy Policy</div>
<svg class="a" style="left:885px;top:702px" width="9" height="7" viewBox="0 0 9 7"><path d="M1 1.5 L4.5 5 L8 1.5" fill="none" stroke="#a3a4a6" stroke-width="1.3"/></svg>
<div class="t ft" style="left:1125px">Cookies</div>


<!-- right panel -->
<svg class="a" style="left:650px;top:82px" width="14" height="14" viewBox="0 0 14 14"><rect width="14" height="14" fill="#0b4f87"/><g fill="none" stroke="#fff" stroke-linecap="round" stroke-linejoin="round" transform="scale(0.39)"><path d="M14.5 7 C18 6.3 23 6.4 23.6 8.6 C24.2 11 19.5 14 16 16.2" stroke-width="2.6"/><path d="M9 18.8 C13 18.4 18.6 18.2 18.6 20.8 C18.6 24.5 12 28.8 6 30 C8 27 10.5 23.5 12 21.5" stroke-width="2.5"/><path d="M30 15 C26 14.7 22 15 22.4 17.6 C22.8 19.8 27.8 20.5 27.8 23.6 C27.8 27 22 27.2 18.6 27" stroke-width="2.6"/></g></svg>
<div class="t" style="left:672.5px;top:82.5px;font-size:10.8px;font-weight:bold;color:#5b5c5e">3DSwym</div>
<div class="a" style="left:1173.5px;top:86.3px;width:11px;height:1.8px;background:#6a6a6a"></div>
<svg class="a" style="left:1209px;top:81px" width="14" height="13" viewBox="0 0 14 13"><path d="M1 4 V1 H4 M10 1 H13 V4 M13 9 V12 H10 M4 12 H1 V9" fill="none" stroke="#6a6a6a" stroke-width="1.8"/></svg>
<svg class="a" style="left:1247px;top:84.5px" width="10" height="6" viewBox="0 0 10 6"><path d="M1 1 L5 4.8 L9 1" fill="none" stroke="#6a6a6a" stroke-width="1.3"/></svg>
<div class="a" style="left:650px;top:106px;width:620px;height:1px;background:#e6e7e8"></div>
<svg class="a" style="left:661px;top:115px" width="16" height="16" viewBox="0 0 16 16"><path d="M1 2.5 H15 M1 8 H15 M1 13.5 H15" stroke="#a9aaab" stroke-width="1.6"/></svg>
<div class="t" style="left:693px;top:116px;font-size:11.6px;font-weight:bold;color:#6a6b6d">Prodaja i marketing</div>
<svg class="a" style="left:1246px;top:117px" width="18" height="11" viewBox="0 0 18 11"><path d="M2 2 L9 8.5 L16 2" fill="none" stroke="#a9aaab" stroke-width="1.6"/></svg>
<!-- stream area -->
<div class="a" style="left:650px;top:139px;width:620px;height:541px;background:#f2f3f4"></div>
<!-- card -->
<div class="a" style="left:659px;top:139px;width:599px;height:504px;background:#fff;border-top:1px solid #8d6a8d;border-left:1px solid #ebebeb;border-right:1px solid #ebebeb;border-bottom:1px solid #e6e6e6"></div>
<div class="a" style="left:659px;top:140px;width:599px;height:37px;background:#f7f7f8"></div>
<div class="a" style="left:659px;top:140px;width:33px;height:37px;background:#760a78"></div>
<svg class="a" style="left:667px;top:149px" width="18" height="18" viewBox="0 0 18 18"><rect x="1" y="2" width="16" height="14" fill="none" stroke="#fff" stroke-width="1.6"/><path d="M3 14 L7.5 8.5 L10.5 11.5 L12.5 9.5 L15 14 Z" fill="#fff"/><circle cx="12.5" cy="5.8" r="1.6" fill="#fff"/></svg>
<div class="t" style="left:700.5px;top:148px;font-size:19.8px;color:#3d3f42">Nove boje</div>
<svg class="a" style="left:1231px;top:153px" width="14" height="9" viewBox="0 0 14 9"><path d="M1.5 1.5 L7 7 L12.5 1.5" fill="none" stroke="#555" stroke-width="1.6"/></svg>
<!-- author -->
<div class="a" style="left:690px;top:192.5px;width:120px;height:25px;border-radius:12.5px;background:#f3f4f5"></div>
<div class="a" style="left:668px;top:189.3px;width:32.5px;height:32.5px;border-radius:50%;background:#1d9479"></div>
<div class="t" style="left:668px;top:197.5px;width:32.5px;text-align:center;font-size:14px;line-height:16px;font-weight:bold;color:#dff6ec">SZ</div>
<svg class="a" style="left:690px;top:183px" width="14" height="14" viewBox="0 0 14 14"><circle cx="7" cy="7" r="6.3" fill="#4aa53f" stroke="#c8f5c8" stroke-width="1"/><path d="M4 7.2 L6.2 9.3 L10 5" fill="none" stroke="#fff" stroke-width="1.5"/></svg>
<div class="t" style="left:708px;top:198.5px;font-size:11.7px;color:#6a6b6d">By <b style="color:#3b78b0">Srdjan Zivkov</b></div>
<div class="t" style="left:816px;top:199px;font-size:10.8px;color:#a9aaab">6 mins ago</div>
<div class="t" style="left:875px;top:198.5px;font-size:10.8px;color:#a9aaab">- Edited</div>
<!-- image -->
<div class="a" style="left:742px;top:235px;width:435px;height:223px;background:#fff;border:1px solid #ebebeb"></div>
<svg class="a" style="left:743px;top:236px" width="433" height="221" viewBox="743 236 433 221">
<defs><linearGradient id="pl2" x1="0" y1="0" x2="1" y2="1"><stop offset="0" stop-color="#716c68"/><stop offset="1" stop-color="#5e5a57"/></linearGradient></defs>
<!-- bottom plate -->
<path d="M881.4 457 L905.9 420.4 L1011.4 435.7 L999 457 Z" fill="url(#pl2)"/>
<!-- trays -->
<path d="M962 343 L991 348 L977 379 L962 376 Z" fill="#cfc3b3" stroke="#6d6a66" stroke-width="0.9"/>
<path d="M962 366 L995 364 L979 398 L962 401 Z" fill="#cdbfab" stroke="#6d6a66" stroke-width="0.9"/>
<rect x="976" y="344" width="21.5" height="5.5" fill="#4d9bd8"/>
<!-- interior -->
<path d="M884 308 L967 322 L968 426 L884 412 Z" fill="#dcd9d5"/>
<path d="M925 336 L957 342 L957 414 L925 408 Z" fill="#d3d0cb"/>
<path d="M931 358 L955.5 362 L955.5 367 L931 363 Z" fill="#8f8b86"/>
<path d="M933 358 L936 364 M938 359 L941 365 M943 360 L946 366 M948 361 L951 366" stroke="#5f5b57" stroke-width="0.9"/>
<path d="M924 390 L956 393 L954 402 L926 400 Z" fill="#3a3a3a"/>
<path d="M924 403 L956 410 V422 L924 414Z" fill="#b9b5b0"/>
<rect x="882" y="304" width="7" height="109" fill="#bcb9b6"/>
<rect x="953" y="313" width="15.5" height="112" fill="#c0bdba"/>
<path d="M953 313 V425" stroke="#9e9b98" stroke-width="0.8"/>
<g fill="#777"><circle cx="885" cy="330" r="0.7"/><circle cx="885" cy="350" r="0.7"/><circle cx="885" cy="370" r="0.7"/><circle cx="885" cy="390" r="0.7"/><circle cx="966" cy="340" r="0.7"/><circle cx="966" cy="360" r="0.7"/><circle cx="966" cy="380" r="0.7"/><circle cx="966" cy="400" r="0.7"/></g>
<!-- door -->
<path d="M885.5 329 L929 352 L931 425.5 L886.7 406.7 Z" fill="#141414"/>
<path d="M891 342 L922 358 L922 386.7 L891 373 Z" fill="#d2cfca"/>
<path d="M891.5 343 L911 353 L896 368 L891.5 366 Z" fill="#d27e26"/>
<path d="M891 380 L923 394 L923 418 L891 402 Z" fill="#343434"/>
<circle cx="906" cy="400" r="4" fill="none" stroke="#555" stroke-width="1"/>
<!-- front band -->
<path d="M886 305.7 L961 315 L961 328.7 L886 321 Z" fill="#a30e12"/>
<!-- top plate -->
<path d="M875.3 296.6 L905.9 256.8 L1003.7 272 L982.3 308.8 L957.9 313.4 L884.5 301 Z" fill="#b20d12"/>
<path d="M875.3 296.6 L884.5 301 L957.9 313.4 L982.3 308.8 L982 312 L958 317 L884 305 L875.5 300 Z" fill="#6e090b"/>
<path d="M887.5 302.7 L925.7 260 L976 267 L958 312 Z" fill="#3c3c3c"/>
<ellipse cx="946" cy="273" rx="15.5" ry="7.5" fill="#8d8d8d"/>
<path d="M933 272 C933 260 959 260 959 272 Z" fill="#a6a6a6"/>
<ellipse cx="946" cy="262" rx="10.5" ry="4" fill="#bcbcbc"/>
<!-- yellow scribbles -->
<g fill="none" stroke="#f3ee3c" stroke-width="2.2" stroke-linecap="round" stroke-linejoin="round">
<path d="M884 290 L890 286 L887 283 L896 279 L892 275 L901 271 L897 267 L906 264 L903 261 L913 259 L910 256 L920 256"/>
<path d="M887 296 L894 291 L891 288 L899 284"/>
<path d="M968 300 L975 295 L971 291 L980 287 L976 283 L986 279 L982 276 L992 275 L988 272 L997 273"/>
<path d="M890 310 L895 305 L898 317 L903 307 L906 318 L910 311 L916 314 L935 316 L941 312 L946 319 L951 314 L955 320 L961 318"/>
<path d="M920 256 C945 246 970 242 992 246 C1015 252 1040 280 1059 304"/>
<path d="M925 262 C935 252 945 248 955 250"/>
<path d="M992 286 C1015 290 1040 297 1058 304"/>
<path d="M949 318 C985 322 1030 312 1058 304"/>
<path d="M962 325 C1000 326 1035 314 1058 304"/>
</g>
<path d="M1059 312.5 H1127" stroke="#f5d0d8" stroke-width="1.6" stroke-dasharray="3 1.2"/>
<path d="M1164 429 L1165 436 L1159 439" stroke="#888" stroke-width="0.8" fill="none"/>
</svg>
<div class="t" style="left:668px;top:460px;font-size:11.67px;color:#5e5e5e">ksjdhAW UFa sif ačfhalkufh čisfhčhfhSE ČDUFČSFH</div>
<!-- actions -->
<svg class="a" style="left:667px;top:490px" width="14" height="12" viewBox="0 0 14 12"><rect x="0.5" y="5" width="3" height="6.5" fill="#555"/><path d="M4.5 5.5 L7.5 1 C8.5 0.5 9.5 1 9 2.5 L8.5 4.5 H12.5 C13.5 4.5 13.8 5.5 13.3 6.3 L11.5 11.5 H4.5 Z" fill="#555"/></svg>
<div class="t" style="left:684.5px;top:490px;font-size:10.8px;color:#a9aaab">0</div>
<svg class="a" style="left:711px;top:489px" width="14" height="13" viewBox="0 0 14 13"><path d="M0.5 0.5 H13.5 V9 H5 L2.5 12 V9 H0.5 Z" fill="#555"/><circle cx="4" cy="4.7" r="1" fill="#fff"/><circle cx="7" cy="4.7" r="1" fill="#fff"/><circle cx="10" cy="4.7" r="1" fill="#fff"/></svg>
<div class="t" style="left:729.5px;top:490px;font-size:10.8px;color:#a9aaab">1</div>
<svg class="a" style="left:1227px;top:490px" width="13" height="11" viewBox="0 0 13 11"><path d="M1 10.5 C1.5 6 4 4 8 4 V1 L12.5 5.5 L8 10 V7 C5 7 3 8 1 10.5 Z" fill="#555"/></svg>
<!-- comment -->
<div class="a" style="left:667.5px;top:517.5px;width:582px;height:64.5px;background:#f7f7f8;border-radius:3px"></div>
<div class="a" style="left:676px;top:525px;width:27px;height:27px;border-radius:50%;background:#1d9479"></div>
<div class="t" style="left:676px;top:532px;width:27px;text-align:center;font-size:11px;line-height:13px;font-weight:bold;color:#dff6ec">SZ</div>
<svg class="a" style="left:692px;top:522px" width="12" height="12" viewBox="0 0 12 12"><circle cx="6" cy="6" r="5.5" fill="#48b04a" stroke="#fff" stroke-width="1"/><path d="M3.3 6.2 L5.2 8 L8.5 4.3" fill="none" stroke="#fff" stroke-width="1.3"/></svg>
<div class="t" style="left:711.5px;top:527.5px;font-size:10.8px;color:#4b7fae">Srdjan Zivkov <span style="color:#b0b1b3;font-size:10px">- 5 mins ago</span></div>
<div class="t" style="left:711.5px;top:543.5px;font-size:10.8px;color:#555">To jeste lepo ali dosta poskupljuje proizvodnju.</div>
<div class="t" style="left:711.5px;top:560px;font-size:10.8px;color:#4b7fae">Like <span style="color:#b0b1b3;margin:0 1px">-</span> Reply</div>
<svg class="a" style="left:1228px;top:531px" width="11" height="7" viewBox="0 0 11 7"><path d="M1 1 L5.5 5.5 L10 1" fill="none" stroke="#555" stroke-width="1.4"/></svg>
<div class="a" style="left:667.5px;top:592px;width:582px;height:31px;background:#fff;border:1px solid #f0f0f0;border-radius:2px"></div>
<div class="t" style="left:678.5px;top:600.5px;font-size:10.75px;color:#a9aaab">Write a comment</div>
<svg class="a" style="left:1226px;top:598px" width="16" height="17" viewBox="0 0 16 17"><path d="M10 4 L4 11 C2.5 13 4.5 15 6 13.5 L13 6 C15 4 12.5 0.5 10 3 L3 10.5 C0.5 13.5 4 17 7 14" fill="none" stroke="#c4c4c4" stroke-width="1.3"/></svg>
<!-- next card -->
<div class="a" style="left:659px;top:660px;width:599px;height:20px;background:#f5f5f6;border-top:2px solid #a0a0a0"></div>
<div class="a" style="left:659px;top:662px;width:34px;height:18px;background:#a4a5a7"></div>
<svg class="a" style="left:667px;top:672px" width="18" height="8" viewBox="0 0 18 8"><rect x="1" y="1" width="14" height="10" fill="none" stroke="#fff" stroke-width="1.3"/><path d="M8 1 V8 M1 4.5 H8" stroke="#fff" stroke-width="1.1"/><path d="M15 5 H17 V8" stroke="#fff" stroke-width="1.1" fill="none"/></svg>
<div class="a" style="left:659px;top:662px;width:599px;height:18px;overflow:hidden"><div class="t" style="left:41.5px;top:8px;font-size:19.8px;color:#3d3f42">Prodaja tabli C serije</div></div>
<svg class="a" style="left:1231px;top:676px" width="14" height="4" viewBox="0 0 14 4"><path d="M1.5 -3.5 L7 2 L12.5 -3.5" fill="none" stroke="#555" stroke-width="1.6"/></svg>
<div class="a" style="left:641px;top:680px;width:639px;height:9px;background:#fff"></div>

<!-- toolbar overlay -->
<div class="a" style="left:127px;top:620px;width:367px;height:21px;background:#ececec;border:1px solid #cfcfcf;border-bottom:1px solid #c9c9c9;box-shadow:0 0 2px rgba(0,0,0,0.15)"></div>
<div class="a" style="left:128px;top:621px;width:62px;height:19px;background:#a9cde3"></div>
<div class="t" style="left:136.5px;top:625.5px;font-size:10px;color:#4a5a66">Bookmark</div>
<div class="t" style="left:198px;top:625.5px;font-size:10px;color:#555">Document</div>
<div class="t" style="left:268.5px;top:625.5px;font-size:10px;color:#555">View</div>
<div class="t" style="left:322.5px;top:625.5px;font-size:10px;color:#555">Tools</div>
<div class="t" style="left:369px;top:625.5px;font-size:10px;color:#555">Lifecycle</div>
<div class="t" style="left:425px;top:625.5px;font-size:10px;color:#555">Collaboration</div>
<svg class="a" style="left:495px;top:623px" width="17" height="13" viewBox="0 0 17 13"><path d="M1.5 3.5 L4 1 L8.5 5 L13 1 L15.5 3.5 L8.5 11.5 Z" fill="#fff" stroke="#9a9a9a" stroke-width="1.1" stroke-linejoin="round"/></svg>
<div class="a" style="left:127px;top:640px;width:387px;height:41px;background:#e9e9e9;border-left:1px solid #cfcfcf;border-right:1px solid #cfcfcf;box-shadow:1px 0 2px rgba(0,0,0,0.12)"></div>
<div class="a" style="left:254px;top:645px;width:1px;height:31px;background:#d6d6d6"></div>
<div class="a" style="left:339px;top:645px;width:1px;height:31px;background:#d6d6d6"></div>
<div class="a" style="left:379px;top:645px;width:1px;height:31px;background:#d6d6d6"></div>
<!-- bookmark add -->
<svg class="a" style="left:157px;top:647px" width="26" height="27" viewBox="0 0 26 27"><defs><linearGradient id="bg1" x1="0" x2="1"><stop offset="0" stop-color="#fff"/><stop offset="1" stop-color="#d9d9d9"/></linearGradient><linearGradient id="pl" x1="0" y1="0" x2="0" y2="1"><stop offset="0" stop-color="#6ec0ea"/><stop offset="1" stop-color="#2a7fb6"/></linearGradient></defs>
<path d="M1 1 H17 V20 L9 15 L1 23 Z" fill="url(#bg1)" stroke="#5d5d5d" stroke-width="1"/><path d="M4 1 V18 M14 1 V17" stroke="#9a9a9a" stroke-width="0.8"/>
<path d="M16 13 H21 V17 H25 V22 H21 V26 H16 V22 H12 V17 H16 Z" fill="url(#pl)" stroke="#2d6f99" stroke-width="0.8"/></svg>
<svg class="a" style="left:192px;top:647px" width="28" height="27" viewBox="0 0 28 27">
<path d="M1 1 H17 V20 L9 15 L1 23 Z" fill="url(#bg1)" stroke="#5d5d5d" stroke-width="1"/><path d="M4 1 V18 M14 1 V17" stroke="#9a9a9a" stroke-width="0.8"/>
<rect x="11" y="12" width="16" height="14" fill="#fff" stroke="#555" stroke-width="1"/>
<path d="M17 13.5 H21 V17 H25 V21 H21 V24.5 H17 V21 H13 V17 H17 Z" fill="url(#pl)" stroke="#2d6f99" stroke-width="0.8"/></svg>
<svg class="a" style="left:229px;top:653px" width="34" height="20" viewBox="0 0 34 20"><rect x="1.5" y="1" width="20" height="13" fill="#f2f2f2" stroke="#aaa"/><path d="M3 7 H10 M5 4.5 L2.5 7 L5 9.5" stroke="#aaa" stroke-width="1.2" fill="none"/><circle cx="6" cy="15" r="3" fill="#f2f2f2" stroke="#aaa"/><path d="M26 6 L30 6 L28 9 Z" fill="#222"/></svg>
<svg class="a" style="left:273px;top:649px" width="26" height="26" viewBox="0 0 26 26"><circle cx="13" cy="13" r="11.5" fill="#ebebeb" stroke="#9d9d9d" stroke-width="1.2"/><rect x="6" y="11.5" width="14" height="3" rx="0.5" fill="#a7a7a7"/></svg>
<svg class="a" style="left:308px;top:648px" width="26" height="26" viewBox="0 0 26 26"><defs><linearGradient id="st" x1="0" y1="0" x2="0" y2="1"><stop offset="0" stop-color="#7fc3ea"/><stop offset="1" stop-color="#1f6b9e"/></linearGradient></defs><path d="M13 1.5 L16.5 9 L24.5 9.7 L18.5 15 L20.3 23 L13 18.8 L5.7 23 L7.5 15 L1.5 9.7 L9.5 9 Z" fill="url(#st)" stroke="#2b5f82" stroke-width="0.9" stroke-linejoin="round"/></svg>
<svg class="a" style="left:349px;top:648px" width="23" height="26" viewBox="0 0 23 26"><rect x="1" y="1" width="20" height="23" fill="#f7f7f7" stroke="#555" stroke-width="1.2"/><rect x="3.5" y="4" width="4" height="3.5" fill="#2f83b8" stroke="#444" stroke-width="0.5"/><rect x="3.5" y="10.5" width="4" height="3.5" fill="#2f83b8" stroke="#444" stroke-width="0.5"/><rect x="3.5" y="17" width="4" height="3.5" fill="#2f83b8" stroke="#444" stroke-width="0.5"/><path d="M9 6 H18 M9 12.3 H18 M9 18.8 H18" stroke="#555" stroke-width="1"/></svg>
<svg class="a" style="left:387px;top:648px" width="26" height="26" viewBox="0 0 26 26"><defs><linearGradient id="dc" x1="0" y1="0" x2="0" y2="1"><stop offset="0" stop-color="#8ac8ea"/><stop offset="1" stop-color="#2574a8"/></linearGradient></defs><path d="M1 1 H9 L13 5 V16 H1 Z" fill="#fbfbfb" stroke="#555" stroke-width="1"/><path d="M10 8 H19 L24 13 V25 H10 Z" fill="url(#dc)" stroke="#2b5f82" stroke-width="1"/></svg>
<svg class="a" style="left:422px;top:648px" width="27" height="26" viewBox="0 0 27 26"><path d="M10 9 L25.5 17.5 M10 16 L25.5 7.5" stroke="#6f6f6f" stroke-width="2.2" stroke-linecap="round"/><path d="M10.5 9.3 L25 17" stroke="#e8e8e8" stroke-width="0.8"/><path d="M10.5 15.7 L25 8" stroke="#e8e8e8" stroke-width="0.8"/><ellipse cx="5.8" cy="5.8" rx="5" ry="4.8" fill="#2c7cad" stroke="#235f86" stroke-width="0.8"/><ellipse cx="5.8" cy="19.4" rx="5" ry="4.8" fill="#2c7cad" stroke="#235f86" stroke-width="0.8"/><path d="M8.5 8.5 L14 12.5 L8.5 16.5" stroke="#2c7cad" stroke-width="3" fill="none"/><circle cx="5.2" cy="5.5" r="1.4" fill="#dbeef8"/><circle cx="5.2" cy="19.7" r="1.4" fill="#dbeef8"/></svg>
<svg class="a" style="left:458px;top:648px" width="26" height="27" viewBox="0 0 26 27"><path d="M1 3 H5 V1 H13 V3 H17 V22 H1 Z" fill="#f7f7f7" stroke="#b5b5b5" stroke-width="1"/><path d="M9 10 H18 L23 15 V26 H9 Z" fill="#c4c4c4" stroke="#aaa" stroke-width="1"/></svg>

<!-- close button -->
<div class="a" style="left:620px;top:37.5px;width:40px;height:40px;border-radius:50%;background:rgba(66,68,71,0.93)"></div>
<svg class="a" style="left:630px;top:47.5px" width="20" height="20" viewBox="0 0 20 20"><path d="M4.5 4.5 L15.5 15.5 M15.5 4.5 L4.5 15.5" stroke="#fff" stroke-width="1.9"/></svg>
<!-- compass -->
<svg class="a" style="left:36px;top:0px" width="66" height="66" viewBox="0 0 66 66">
<defs><linearGradient id="tg" x1="0" y1="0" x2="0" y2="1"><stop offset="0" stop-color="#bcd5e8"/><stop offset="1" stop-color="#5c93bb"/></linearGradient>
<radialGradient id="cg" cx="50%" cy="50%" r="50%"><stop offset="0.75" stop-color="#0f568b"/><stop offset="1" stop-color="#0b4472"/></radialGradient></defs>
<circle cx="33.3" cy="30.8" r="28.6" fill="#0c4877"/><circle cx="33.3" cy="30.8" r="25.5" fill="#105a90"/>
<path d="M13.8 19.5 C15 10 24 4.6 33.5 4.6 C43 4.6 52 10 53 19.5 C52 24 47 27 45 28 C43 22 38.5 18.3 33.5 18.3 C28.5 18.3 24 22 22 28 C19.5 27 14.5 24 13.8 19.5 Z" fill="url(#tg)" opacity="0.9"/>
<path d="M18 13.8 L24 19.7 M49 13.8 L43 19.7" stroke="#8fb3cf" stroke-width="0.8"/>
<circle cx="34" cy="30.3" r="12" fill="#125b92" stroke="#3577a8" stroke-width="1.3"/>
<path d="M29.2 25 L40 30.5 L29.2 36 Z" fill="none" stroke="#fff" stroke-width="1.7" stroke-linejoin="round"/>
<path d="M17.4 46.8 L22.5 41.7 M45 41.7 L49.5 46.8" stroke="#3a79a8" stroke-width="1"/>
<text x="14.8" y="34.3" font-family="Liberation Sans" font-size="9" font-weight="bold" fill="#fff" text-anchor="middle" letter-spacing="-0.4">3D</text>
<text x="33.3" y="51.5" font-family="Liberation Sans" font-size="8.3" font-weight="bold" fill="#fff" text-anchor="middle" letter-spacing="-0.3">V.R</text>
<path d="M49.8 26 V34" stroke="#fff" stroke-width="1.8"/><path d="M52 25 L53.5 27.5" stroke="#fff" stroke-width="1"/><path d="M53.5 25.5 V31" stroke="#fff" stroke-width="0.9"/>
<g stroke="#fff" stroke-width="1.6" fill="none" stroke-linecap="round"><path d="M29.5 8.5 L32 12 L30.5 15.5 M34.5 8 L32 12"/><path d="M34.5 11.5 L36 13.5 L35.3 15.8 M37.5 11 L36 13.5"/></g>
</svg>
</body></html>
